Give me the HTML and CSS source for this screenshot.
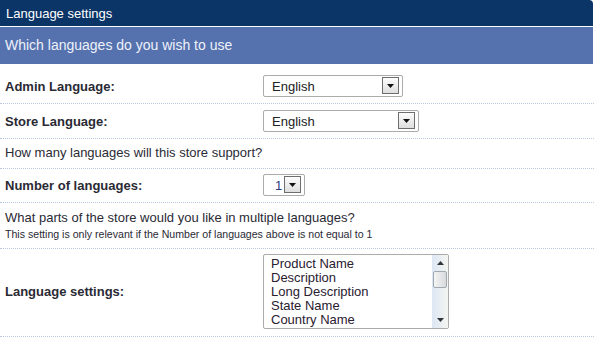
FILE: index.html
```html
<!DOCTYPE html>
<html>
<head>
<meta charset="utf-8">
<link rel="stylesheet" href="styles.css">
</head>
<body>
<div class="panel">
  <div class="title">Language settings</div>
  <div class="subtitle">Which languages do you wish to use</div>
  <div class="rows">
    <div class="row r1">
      <div class="label">Admin Language:</div>
      <div class="field">
        <div class="select w-admin"><span class="val">English</span><span class="btn"><svg width="7" height="4" viewBox="0 0 7 4"><path d="M0 0h7L3.5 4z" fill="#111"/></svg></span></div>
      </div>
    </div>
    <div class="row r1">
      <div class="label">Store Language:</div>
      <div class="field">
        <div class="select w-store"><span class="val">English</span><span class="btn"><svg width="7" height="4" viewBox="0 0 7 4"><path d="M0 0h7L3.5 4z" fill="#111"/></svg></span></div>
      </div>
    </div>
    <div class="row text-row">
      <div class="text">How many languages will this store support?</div>
    </div>
    <div class="row r4">
      <div class="label">Number of languages:</div>
      <div class="field">
        <div class="select w-num"><span class="val num">1</span><span class="btn"><svg width="7" height="4" viewBox="0 0 7 4"><path d="M0 0h7L3.5 4z" fill="#111"/></svg></span></div>
      </div>
    </div>
    <div class="row text-row two">
      <div class="text">What parts of the store would you like in multiple languages?</div>
      <div class="note">This setting is only relevant if the Number of languages above is not equal to 1</div>
    </div>
    <div class="row list-row">
      <div class="label">Language settings:</div>
      <div class="field">
        <div class="listbox">
          <ul class="items">
            <li>Product Name</li>
            <li>Description</li>
            <li>Long Description</li>
            <li>State Name</li>
            <li>Country Name</li>
          </ul>
          <div class="scrollbar">
            <span class="arrow up"><svg width="7" height="4" viewBox="0 0 7 4"><path d="M0 4h7L3.5 0z" fill="#333"/></svg></span>
            <span class="thumb"></span>
            <span class="track"></span>
            <span class="arrow down"><svg width="7" height="4" viewBox="0 0 7 4"><path d="M0 0h7L3.5 4z" fill="#333"/></svg></span>
          </div>
        </div>
      </div>
    </div>
  </div>
</div>
</body>
</html>
```
FILE: styles.css
```css
* { box-sizing: border-box; }
html, body { margin: 0; padding: 0; background: #fff; }
body {
  font-family: "Liberation Sans", Arial, sans-serif;
  color: #2a2a35;
  width: 594px;
}
.panel { width: 594px; }
.title {
  height: 26px;
  background: #0b3467;
  color: #fff;
  font-size: 13px;
  line-height: 27px;
  padding-left: 6px;
  border-top-right-radius: 4px;
  margin-right: 1px;
}
.subtitle {
  margin-top: 1px;
  height: 37px;
  background: #5571ae;
  color: #eef2fa;
  font-size: 14px;
  line-height: 37px;
  padding-left: 5px;
  margin-right: 1px;
}
.rows { padding-top: 5px; }
.row {
  display: flex;
  align-items: center;
  border-bottom: 1px dotted #b8c8e2;
  padding-left: 5px;
}
.r1 { padding-top: 6px; padding-bottom: 6px; }
.r4 { padding-top: 5px; padding-bottom: 6px; }
.label {
  width: 258px;
  flex: none;
  font-weight: bold;
  font-size: 13px;
}
.field { display: flex; }
.select {
  height: 22px;
  border: 1px solid #ababab;
  border-radius: 2px;
  background: #fff;
  display: flex;
  align-items: center;
  justify-content: space-between;
  padding: 0 3px 0 8px;
}
.w-admin { width: 140px; }
.w-store { width: 156px; }
.w-num { width: 42px; padding-left: 11px; }
.val { font-size: 13px; color: #222; }
.num { color: #2a3a80; }
.btn {
  width: 17px;
  height: 17px;
  border: 1px solid #6e6e6e;
  background: linear-gradient(#fdfdfd, #dedede);
  display: flex;
  align-items: flex-end;
  justify-content: center;
  padding-bottom: 5px;
  margin-top: -1px;
}
.btn svg { display: block; }
.text-row {
  display: block;
  padding-top: 6px;
  padding-bottom: 7px;
}
.text { font-size: 13px; line-height: 16px; }
.two { padding-top: 7px; padding-bottom: 7px; }
.note { font-size: 10.6px; line-height: 13px; margin-top: 2px; }
.list-row { padding-top: 5px; padding-bottom: 7px; }
.listbox {
  width: 186px;
  height: 75px;
  border: 1px solid #ababab;
  border-radius: 2px;
  display: flex;
  background: #fff;
}
.items {
  list-style: none;
  margin: 0;
  padding: 2px 0 0 7px;
  flex: 1;
  font-size: 13px;
  line-height: 14px;
  color: #2a2030;
}
.scrollbar {
  width: 16px;
  flex: none;
  display: flex;
  flex-direction: column;
  background: linear-gradient(90deg, #dde6f4, #f3f5f0);
}
.arrow {
  height: 16px;
  display: flex;
  align-items: center;
  justify-content: center;
}
.thumb {
  height: 17px;
  margin: 0 1px;
  border: 1px solid #a0a8b0;
  border-radius: 2px;
  background: linear-gradient(90deg, #f4f4f4, #d8dadc);
}
.track { flex: 1; }
```
